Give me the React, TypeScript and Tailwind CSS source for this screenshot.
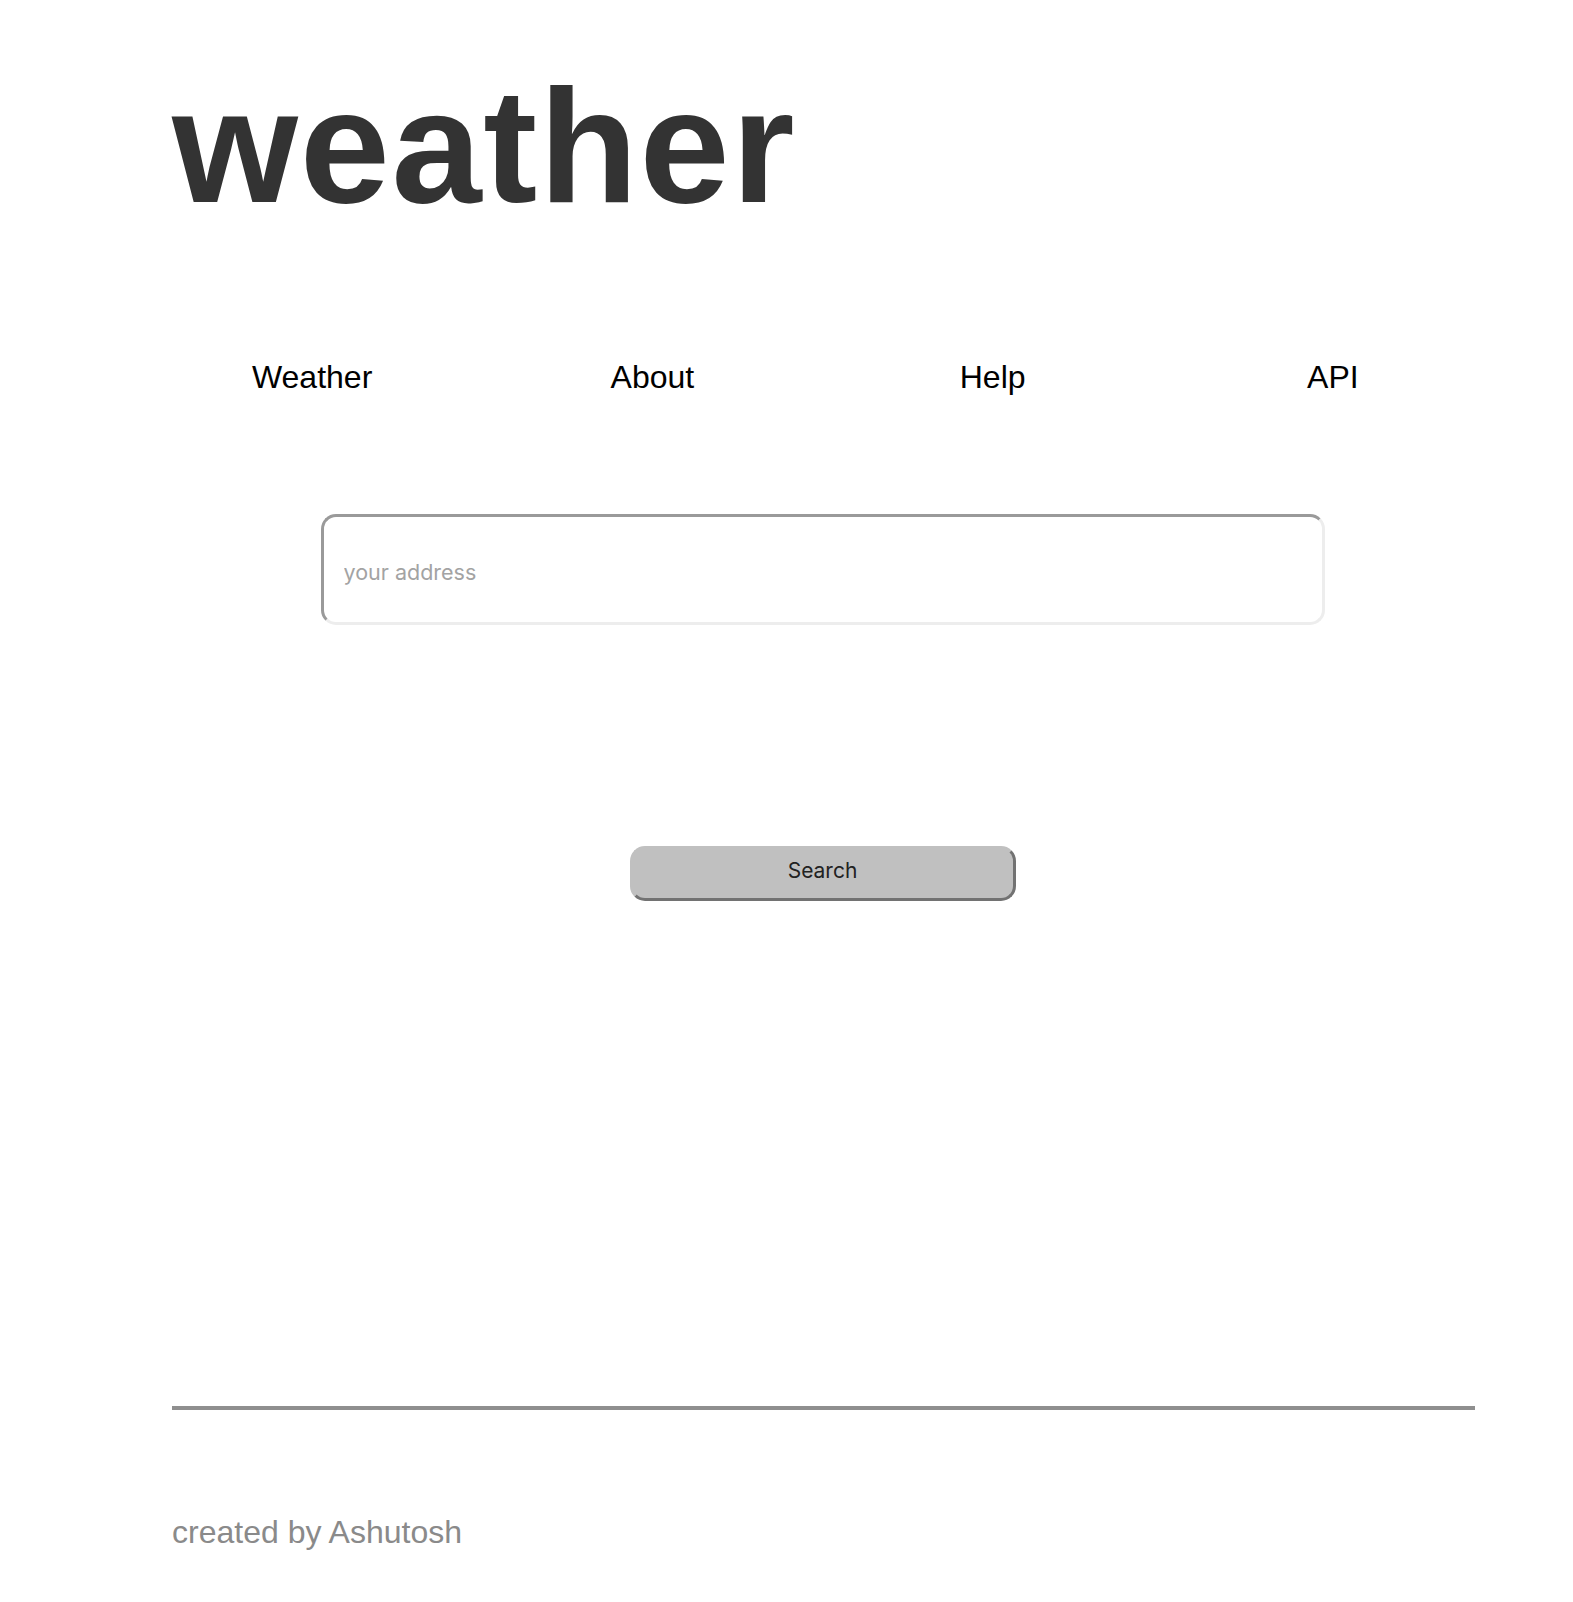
export default function App() {
    const links = ['Weather', 'About', 'Help', 'API'];

    return (
        <div className="min-h-[1602px] w-full bg-white font-['Liberation_Sans',Arial,sans-serif]">
            <div className="ml-[142px] w-[1361px] pb-[51px]">

                {/* Title */}
                <h1 className="ml-[30px] pt-[65px] text-[162px] font-bold leading-none tracking-[1.7px] text-[#333333]">
                    weather
                </h1>

                {/* Nav */}
                <nav className="mt-[132px] grid grid-cols-4 text-center text-[32px] leading-[37px] text-black">
                    {links.map((l) => (
                        <a key={l} href="#" className="block">{l}</a>
                    ))}
                </nav>

                {/* Search form */}
                <form className="flex flex-col items-center" onSubmit={(e) => e.preventDefault()}>
                    <input
                        type="text"
                        placeholder="your address"
                        className="mt-[118px] h-[111px] w-[1004px] rounded-[15px] border-[3px] border-t-[#9a9a9a] border-l-[#9a9a9a] border-b-[#ededed] border-r-[#ededed] bg-white px-[20px] pt-[4px] font-['Inter',sans-serif] text-[21.5px] text-[#222] outline-none placeholder:text-[#a3a3a3]"
                    />
                    <button
                        type="submit"
                        className="mt-[221px] h-[55px] w-[386px] rounded-[15px] border-[3px] border-t-[#c0c0c0] border-l-[#c0c0c0] border-b-[#727272] border-r-[#727272] bg-[#c0c0c0] pb-[5px] font-['Inter',sans-serif] text-[21px] text-[#222]"
                    >
                        Search
                    </button>
                </form>

                {/* Footer */}
                <hr className="ml-[30px] mr-[28px] mt-[505px] h-[4px] border-0 bg-[#8f8f8f]" />
                <p className="ml-[30px] mt-[104px] text-[32px] leading-[37px] text-[#8a8a8a]">
                    created by Ashutosh
                </p>
            </div>
        </div>
    );
}
